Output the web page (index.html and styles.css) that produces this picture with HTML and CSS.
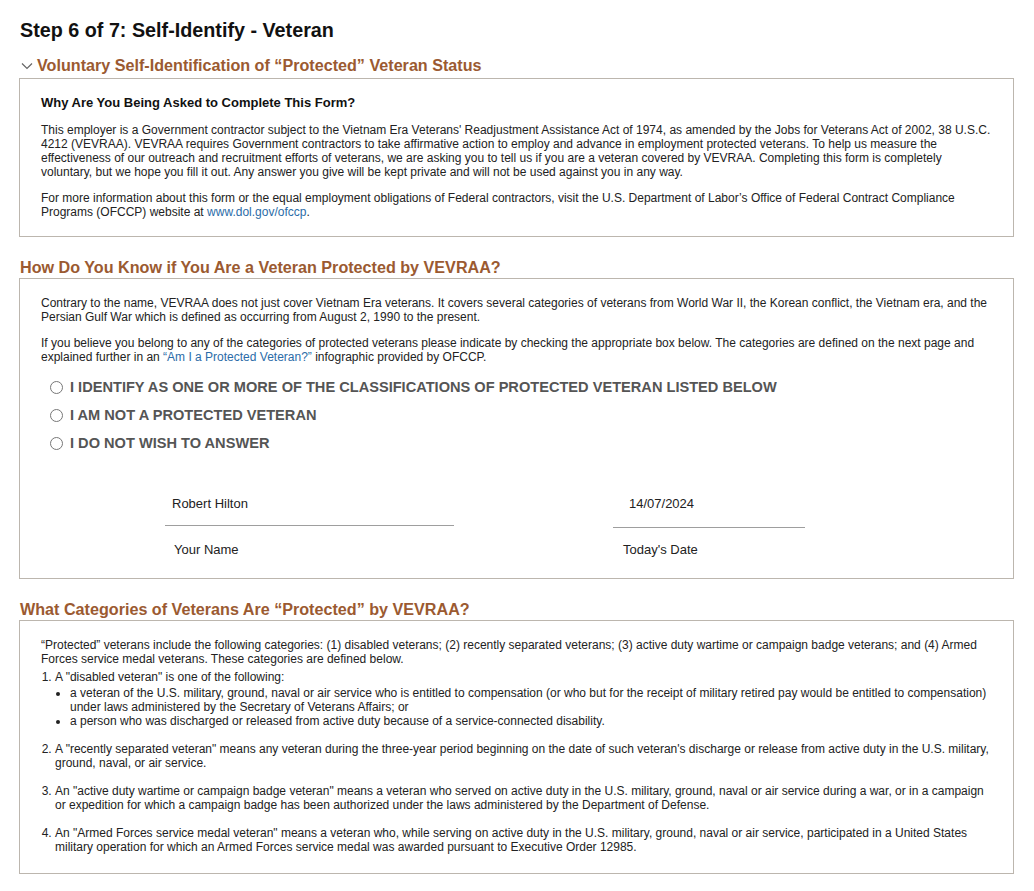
FILE: index.html
```html
<!DOCTYPE html>
<html lang="en">
<head>
<meta charset="utf-8">
<title>Step 6 of 7: Self-Identify - Veteran</title>
<link rel="stylesheet" href="styles.css">
</head>
<body>
<main class="page">
  <h1 class="page-title">Step 6 of 7: Self-Identify - Veteran</h1>

  <h2 class="section-title section-title--toggle">
    <svg class="chevron" width="12" height="8" viewBox="0 0 12 8" aria-hidden="true"><polyline points="1,1.5 6,6.5 11,1.5" fill="none" stroke="#666" stroke-width="1.2"/></svg>
    Voluntary Self-Identification of “Protected” Veteran Status
  </h2>
  <section class="panel">
    <h3 class="panel-heading">Why Are You Being Asked to Complete This Form?</h3>
    <p class="text">This employer is a Government contractor subject to the Vietnam Era Veterans' Readjustment Assistance Act of 1974, as amended by the Jobs for Veterans Act of 2002, 38 U.S.C. 4212 (VEVRAA). VEVRAA requires Government contractors to take affirmative action to employ and advance in employment protected veterans. To help us measure the effectiveness of our outreach and recruitment efforts of veterans, we are asking you to tell us if you are a veteran covered by VEVRAA. Completing this form is completely voluntary, but we hope you fill it out. Any answer you give will be kept private and will not be used against you in any way.</p>
    <p class="text">For more information about this form or the equal employment obligations of Federal contractors, visit the U.S. Department of Labor’s Office of Federal Contract Compliance Programs (OFCCP) website at <a class="link" href="#">www.dol.gov/ofccp</a>.</p>
  </section>

  <h2 class="section-title">How Do You Know if You Are a Veteran Protected by VEVRAA?</h2>
  <section class="panel panel--form">
    <p class="text">Contrary to the name, VEVRAA does not just cover Vietnam Era veterans. It covers several categories of veterans from World War II, the Korean conflict, the Vietnam era, and the Persian Gulf War which is defined as occurring from August 2, 1990 to the present.</p>
    <p class="text text--lead">If you believe you belong to any of the categories of protected veterans please indicate by checking the appropriate box below. The categories are defined on the next page and explained further in an <a class="link" href="#">“Am I a Protected Veteran?”</a> infographic provided by OFCCP.</p>
    <div class="options">
      <label class="option"><span class="radio"></span>I IDENTIFY AS ONE OR MORE OF THE CLASSIFICATIONS OF PROTECTED VETERAN LISTED BELOW</label>
      <label class="option"><span class="radio"></span>I AM NOT A PROTECTED VETERAN</label>
      <label class="option"><span class="radio"></span>I DO NOT WISH TO ANSWER</label>
    </div>
    <div class="sign-row">
      <div class="field field--name">
        <div class="field-value">Robert Hilton</div>
        <div class="field-label">Your Name</div>
      </div>
      <div class="field field--date">
        <div class="field-value">14/07/2024</div>
        <div class="field-label">Today's Date</div>
      </div>
    </div>
  </section>

  <h2 class="section-title">What Categories of Veterans Are “Protected” by VEVRAA?</h2>
  <section class="panel panel--list">
    <p class="text text--intro">“Protected” veterans include the following categories: (1) disabled veterans; (2) recently separated veterans; (3) active duty wartime or campaign badge veterans; and (4) Armed Forces service medal veterans. These categories are defined below.</p>
    <ol class="cat-list">
      <li>A "disabled veteran" is one of the following:
        <ul class="sub-list">
          <li>a veteran of the U.S. military, ground, naval or air service who is entitled to compensation (or who but for the receipt of military retired pay would be entitled to compensation) under laws administered by the Secretary of Veterans Affairs; or</li>
          <li>a person who was discharged or released from active duty because of a service-connected disability.</li>
        </ul>
      </li>
      <li>A "recently separated veteran" means any veteran during the three-year period beginning on the date of such veteran's discharge or release from active duty in the U.S. military, ground, naval, or air service.</li>
      <li>An "active duty wartime or campaign badge veteran" means a veteran who served on active duty in the U.S. military, ground, naval or air service during a war, or in a campaign or expedition for which a campaign badge has been authorized under the laws administered by the Department of Defense.</li>
      <li>An "Armed Forces service medal veteran" means a veteran who, while serving on active duty in the U.S. military, ground, naval or air service, participated in a United States military operation for which an Armed Forces service medal was awarded pursuant to Executive Order 12985.</li>
    </ol>
  </section>
</main>
</body>
</html>
```

FILE: styles.css
```css
* { box-sizing: border-box; }

html, body {
  margin: 0;
  padding: 0;
  background: #fff;
}

body {
  font-family: "Liberation Sans", Arial, sans-serif;
  color: #222;
}

.page {
  padding: 18px 20px 20px 19px;
  width: 1034px;
}

.page-title {
  margin: 0 0 0 1px;
  font-size: 19.75px;
  line-height: 24px;
  font-weight: bold;
  color: #111;
}

.section-title {
  margin: 20px 0 1px 1px;
  font-size: 16.15px;
  line-height: 20px;
  font-weight: bold;
  color: #9b5a31;
  display: flex;
  align-items: center;
}

.section-title--toggle {
  margin-top: 13px;
  margin-bottom: 3px;
  gap: 4px;
}

.chevron {
  display: block;
  flex: none;
  margin-left: 1px;
  margin-top: 1px;
}

.panel {
  border: 1px solid #bcb6ae;
  padding: 15px 20px 17px 21px;
  width: 995px;
}

.panel-heading {
  margin: 0 0 11px;
  font-size: 13px;
  line-height: 18px;
  font-weight: bold;
  color: #111;
}

.text {
  margin: 0 0 12px;
  font-size: 12px;
  line-height: 14px;
  color: #222;
}

.text:last-child { margin-bottom: 0; }

.text--lead { margin-bottom: 9px; }

.link {
  color: #2b6ca8;
  text-decoration: none;
}

.panel--form {
  padding-top: 17px;
  padding-bottom: 20px;
}

.options {
  display: flex;
  flex-direction: column;
  margin-left: 9px;
}

.option {
  display: flex;
  align-items: center;
  height: 28px;
  font-size: 14.6px;
  font-weight: bold;
  color: #555;
}

.radio {
  width: 13px;
  height: 13px;
  border: 1px solid #777;
  border-radius: 50%;
  margin-right: 7px;
  flex: none;
}

.sign-row {
  display: flex;
  margin-top: 39px;
  margin-left: 124px;
  gap: 159px;
}

.field {
  display: flex;
  flex-direction: column;
  font-size: 13px;
  line-height: 16px;
  color: #222;
}

.field--name { width: 289px; }
.field--date { width: 192px; }

.field-value {
  padding: 0 0 13px 7px;
  border-bottom: 1px solid #9e9e9e;
}

.field--date .field-value {
  padding-left: 16px;
  padding-bottom: 15px;
}

.field-label {
  padding: 16px 0 0 9px;
}

.field--date .field-label {
  padding-top: 14px;
  padding-left: 10px;
}

.panel--list {
  padding-top: 17px;
  padding-bottom: 19px;
}

.text--intro {
  margin-bottom: 4px;
}

.cat-list {
  margin: 0;
  padding-left: 14px;
  font-size: 12px;
  line-height: 14px;
  color: #222;
}

.cat-list > li + li { margin-top: 14px; }

.sub-list {
  margin: 2px 0 1px;
  padding-left: 15px;
  list-style: disc;
}
```
